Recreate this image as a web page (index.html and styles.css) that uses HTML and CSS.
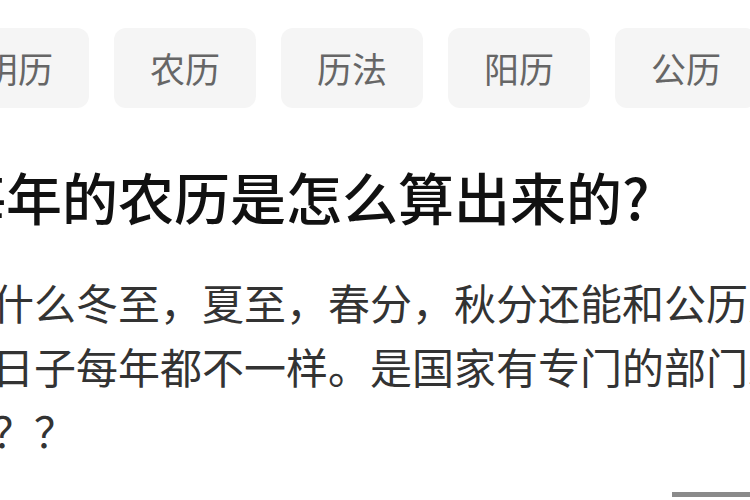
FILE: index.html
```html
<!DOCTYPE html>
<html lang="zh-CN">
<head>
<meta charset="utf-8">
<title>每年的农历是怎么算出来的?</title>
<link rel="stylesheet" href="styles.css">
</head>
<body>
<div class="page">
  <div class="tags">
    <span class="tag">阴历</span>
    <span class="tag">农历</span>
    <span class="tag">历法</span>
    <span class="tag">阳历</span>
    <span class="tag">公历</span>
  </div>
  <h1 class="title">每年的农历是怎么算出来的?</h1>
  <div class="desc">
    <p class="line">为什么冬至，夏至，春分，秋分还能和公历对上，</p>
    <p class="line">但日子每年都不一样。是国家有专门的部门来算吗</p>
    <p class="line">吗？？</p>
  </div>
  <div class="footer"><span class="bar"></span></div>
</div>
</body>
</html>
```

FILE: styles.css
```css
html, body {
  margin: 0;
  padding: 0;
  background: #ffffff;
}
body {
  width: 750px;
  height: 500px;
  overflow: hidden;
  font-family: "Noto Sans CJK SC", "Noto Sans", sans-serif;
}
.page {
  width: 800px;
  margin-left: -50px;
  padding-top: 28px;
  display: flex;
  flex-direction: column;
}
.tags {
  display: flex;
  gap: 25px;
  margin-left: -3px;
}
.tag {
  flex-shrink: 0;
  height: 80px;
  line-height: 80px;
  padding: 0 36px;
  border-radius: 12px;
  background: #f5f5f5;
  color: #666666;
  font-size: 35px;
  white-space: nowrap;
}
.title {
  margin: 48px 0 0 0;
  font-size: 56px;
  line-height: 80px;
  font-weight: 500;
  color: #111111;
  white-space: nowrap;
}
.desc {
  margin-top: 34px;
  color: #333333;
  font-size: 42px;
  line-height: 64px;
}
.line {
  margin: 0;
  white-space: nowrap;
}
.footer {
  display: flex;
  justify-content: flex-end;
  margin-top: 30px;
}
.bar {
  width: 78px;
  height: 5px;
  background: #8a8a8a;
}
```
